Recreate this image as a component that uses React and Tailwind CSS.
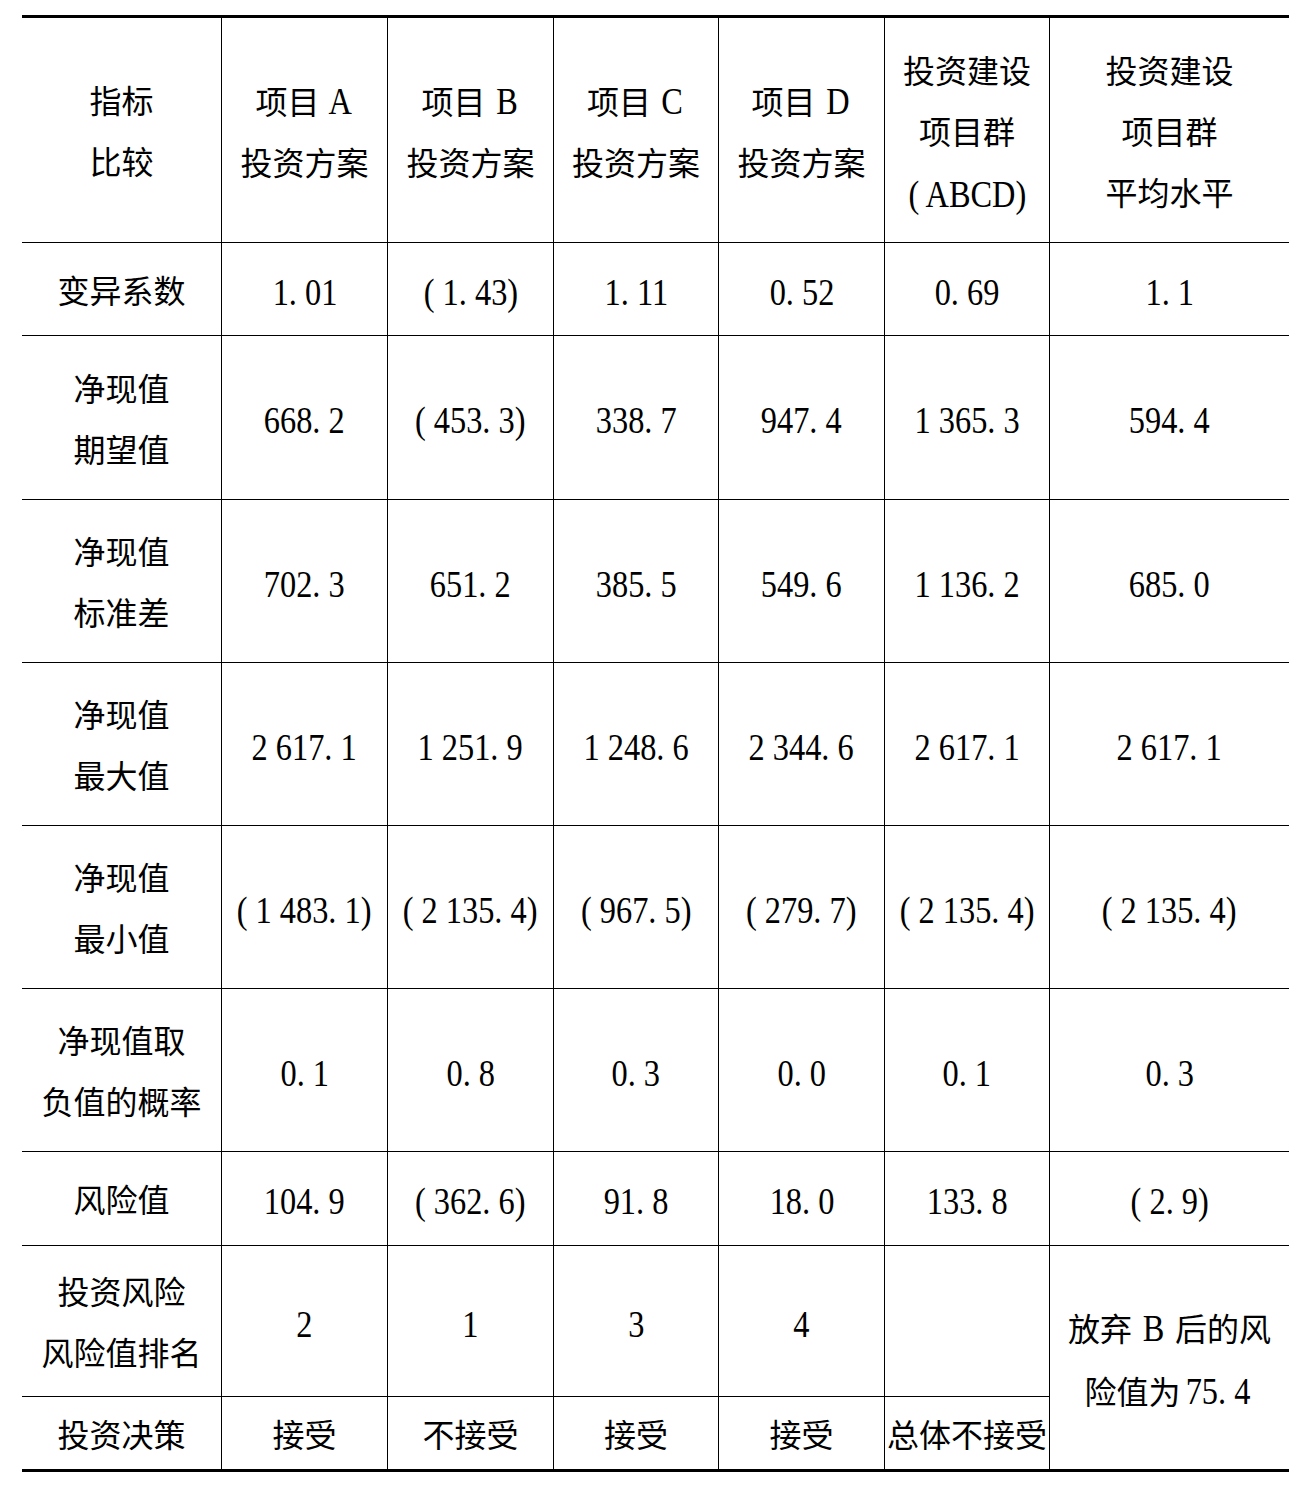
const ROWS = [
  { h: "h-[93px]", cells: ["变异系数", "1. 01", "( 1. 43)", "1. 11", "0. 52", "0. 69", "1. 1"] },
  { h: "h-[164px]", cells: [["净现值", "期望值"], "668. 2", "( 453. 3)", "338. 7", "947. 4", "1 365. 3", "594. 4"] },
  { h: "h-[163px]", cells: [["净现值", "标准差"], "702. 3", "651. 2", "385. 5", "549. 6", "1 136. 2", "685. 0"] },
  { h: "h-[163px]", cells: [["净现值", "最大值"], "2 617. 1", "1 251. 9", "1 248. 6", "2 344. 6", "2 617. 1", "2 617. 1"] },
  { h: "h-[163px]", cells: [["净现值", "最小值"], "( 1 483. 1)", "( 2 135. 4)", "( 967. 5)", "( 279. 7)", "( 2 135. 4)", "( 2 135. 4)"] },
  { h: "h-[163px]", cells: [["净现值取", "负值的概率"], "0. 1", "0. 8", "0. 3", "0. 0", "0. 1", "0. 3"] },
  { h: "h-[94px]", cells: ["风险值", "104. 9", "( 362. 6)", "91. 8", "18. 0", "133. 8", "( 2. 9)"] },
];

const HEADER = [
  ["指标", "比较"],
  ["项目 A", "投资方案"],
  ["项目 B", "投资方案"],
  ["项目 C", "投资方案"],
  ["项目 D", "投资方案"],
  ["投资建设", "项目群", "( ABCD)"],
  ["投资建设", "项目群", "平均水平"],
];

// latin / digit runs are set taller and squeezed, like the condensed Times of the print
function Line({ text }) {
  const parts = text.split(/([\u4e00-\u9fff]+)/).filter(Boolean);
  return (
    <span className="flex items-baseline justify-center">
      {parts.map((p, i) =>
        /[\u4e00-\u9fff]/.test(p) ? (
          <span key={i}>{p}</span>
        ) : (
          <span key={i} className="inline-block whitespace-pre text-[37px] scale-x-[0.875]">
            {p}
          </span>
        )
      )}
    </span>
  );
}

function Cell({ children, className = "" }) {
  const lines = Array.isArray(children) ? children : [children];
  return (
    <div className={`flex flex-col items-center justify-center pt-[6px] text-center whitespace-nowrap ${className}`}>
      {lines.map((l, i) => (
        <Line key={i} text={l} />
      ))}
    </div>
  );
}

export default function App() {
  return (
    <div className="w-[1306px] h-[1485px] bg-white text-black font-[family-name:'Liberation_Serif','Noto_Sans_CJK_SC',serif] text-[32px] leading-[61px]">
      <div className="pt-[15px] pl-[22px]">
        <div className="grid grid-cols-[200px_166px_166px_165px_166px_165px_239px] border-t-[3px] border-black w-[1267px]">
          {/* header */}
          {HEADER.map((h, i) => (
            <Cell key={i} className={`h-[225px] border-b border-black ${i < 6 ? "border-r" : ""}`}>
              {h}
            </Cell>
          ))}

          {ROWS.map((row, r) =>
            row.cells.map((c, i) => (
              <Cell key={`${r}-${i}`} className={`${row.h} border-b border-black ${i < 6 ? "border-r" : ""}`}>
                {c}
              </Cell>
            ))
          )}

          {/* ranking row */}
          <Cell className="h-[151px] border-b border-r border-black">{["投资风险", "风险值排名"]}</Cell>
          <Cell className="h-[151px] border-b border-r border-black">2</Cell>
          <Cell className="h-[151px] border-b border-r border-black">1</Cell>
          <Cell className="h-[151px] border-b border-r border-black">3</Cell>
          <Cell className="h-[151px] border-b border-r border-black">4</Cell>
          <Cell className="h-[151px] border-b border-r border-black">{[]}</Cell>
          <Cell className="row-span-2 border-b-[3px] border-black">{["放弃 B 后的风", "险值为75. 4"]}</Cell>

          {/* decision row */}
          <Cell className="h-[75px] border-b-[3px] border-r border-black">投资决策</Cell>
          <Cell className="h-[75px] border-b-[3px] border-r border-black">接受</Cell>
          <Cell className="h-[75px] border-b-[3px] border-r border-black">不接受</Cell>
          <Cell className="h-[75px] border-b-[3px] border-r border-black">接受</Cell>
          <Cell className="h-[75px] border-b-[3px] border-r border-black">接受</Cell>
          <Cell className="h-[75px] border-b-[3px] border-r border-black">总体不接受</Cell>
        </div>
      </div>
    </div>
  );
}
